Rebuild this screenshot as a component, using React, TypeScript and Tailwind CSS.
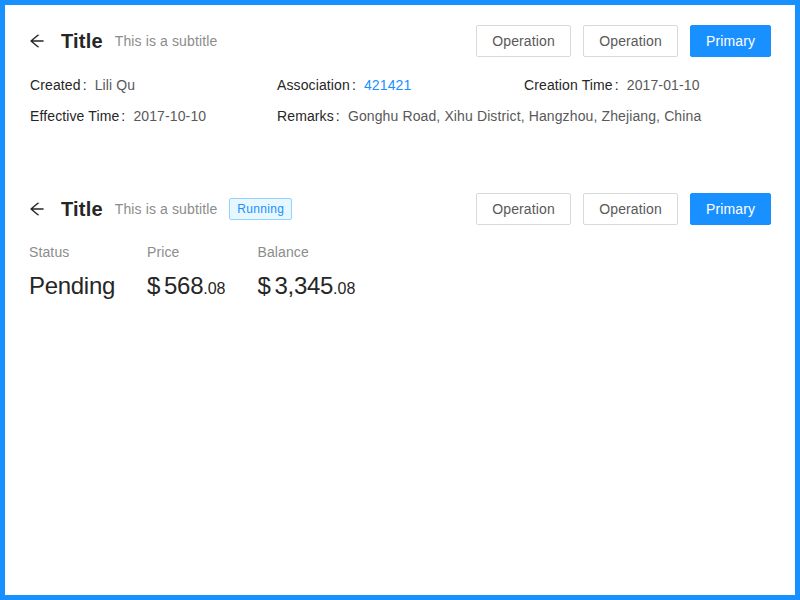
const font = { fontFamily: "'Liberation Sans', Arial, sans-serif" };

function BackIcon() {
  return (
    <svg viewBox="64 64 896 896" width="16" height="16" fill="currentColor" className="text-[#262626]">
      <path d="M872 474H286.9l350.2-304c5.6-4.9 2.2-14-5.2-14h-88.5c-4.2 0-8.2 1.5-11.3 4.2L151.7 484.7a31.9 31.9 0 000 48.3L535.1 866c1.5 1.3 3.3 2 5.2 2h91.5c7.4 0 10.8-9.2 5.2-14L286.9 550H872c4.4 0 8-3.6 8-8v-60c0-4.4-3.6-8-8-8z" />
    </svg>
  );
}

function Header({ tag }: { tag?: string }) {
  return (
    <div className="flex items-center justify-between my-1 h-8">
      <div className="flex items-center">
        <span className="mr-4 flex items-center">
          <BackIcon />
        </span>
        <span className="text-[20px] leading-8 font-bold text-[#262626] mr-3 tracking-[0.2px]">Title</span>
        <span className="text-[14px] leading-[22px] text-[#8c8c8c] mr-3">This is a subtitle</span>
        {tag && (
          <span className="text-[12px] leading-5 px-[7px] border border-[#91d5ff] bg-[#e6f7ff] text-[#1890ff] rounded-[2px] tracking-[0.3px]">
            {tag}
          </span>
        )}
      </div>
      <div className="flex items-center gap-3">
        <button className="h-8 w-[95px] border border-[#d9d9d9] rounded-[2px] bg-white text-[14px] text-[#595959]">Operation</button>
        <button className="h-8 w-[95px] border border-[#d9d9d9] rounded-[2px] bg-white text-[14px] text-[#595959]">Operation</button>
        <button className="h-8 w-[81px] border border-[#1890ff] rounded-[2px] bg-[#1890ff] text-[14px] text-white">Primary</button>
      </div>
    </div>
  );
}

const items = [
  { label: "Created", value: "Lili Qu" },
  { label: "Association", value: "421421", link: true },
  { label: "Creation Time", value: "2017-01-10" },
  { label: "Effective Time", value: "2017-10-10" },
  { label: "Remarks", value: "Gonghu Road, Xihu District, Hangzhou, Zhejiang, China", span: true },
];

function Stat({ title, prefix, int, dec }: { title: string; prefix?: string; int: string; dec?: string }) {
  return (
    <div>
      <div className="text-[14px] leading-[22px] text-[#8c8c8c] mb-1">{title}</div>
      <div className="text-[24px] leading-[38px] text-[#262626] tracking-[-0.3px]">
        {prefix && <span className="mr-1">{prefix}</span>}
        <span>{int}</span>
        {dec && <span className="text-[16px] tracking-normal">{dec}</span>}
      </div>
    </div>
  );
}

export default function App() {
  return (
    <div className="h-screen border-[5px] border-[#1890ff] bg-white tracking-[0.12px]" style={font}>
      <div className="px-6 pt-4 pb-4">
        <Header />
        <div className="pt-[13px] pl-px grid grid-cols-3 gap-y-[9px]">
          {items.map((it) => (
            <div key={it.label} className={`text-[14px] leading-[22px] flex ${it.span ? "col-span-2" : ""}`}>
              <span className="text-[#262626]">{it.label}</span>
              <span className="text-[#262626] ml-[2px] mr-2">:</span>
              <span className={it.link ? "text-[#1890ff]" : "text-[#595959]"}>{it.value}</span>
            </div>
          ))}
        </div>
      </div>
      <div className="px-6 pt-4 mt-[30px]">
        <Header tag="Running" />
        <div className="pt-3 flex gap-8">
          <Stat title="Status" int="Pending" />
          <Stat title="Price" prefix="$" int="568" dec=".08" />
          <Stat title="Balance" prefix="$" int="3,345" dec=".08" />
        </div>
      </div>
    </div>
  );
}
